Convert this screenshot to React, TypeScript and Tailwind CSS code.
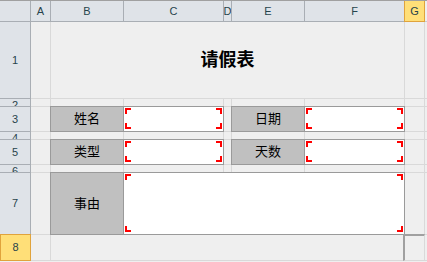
const hdr = "bg-[#dfe3e8] border-r border-b border-[#a9aeb4] flex items-center justify-center overflow-hidden text-[11px] text-[#27434c]";
const cell = "border-r border-b border-[#d9d9d9]";
const rest = "border-b border-[#d9d9d9]";

function Marks() {
  return (
    <>
      <span className="absolute left-px top-px w-[6px] h-[6px] border-l-2 border-t-2 border-[#ff0000]" />
      <span className="absolute right-px top-px w-[6px] h-[6px] border-r-2 border-t-2 border-[#ff0000]" />
      <span className="absolute left-px bottom-[2px] w-[6px] h-[6px] border-l-2 border-b-2 border-[#ff0000]" />
      <span className="absolute right-px bottom-[2px] w-[6px] h-[6px] border-r-2 border-b-2 border-[#ff0000]" />
    </>
  );
}

function Label({ text, span = "" }: { text: string; span?: string }) {
  return (
    <div
      className={`relative -ml-px -mt-px border border-[#9a9a9a] bg-[#c0c0c0] flex items-center justify-center text-[13px] text-black ${span}`}
    >
      {text}
    </div>
  );
}

function Input({ span = "" }: { span?: string }) {
  return <div className={`relative -ml-px -mt-px border border-[#9a9a9a] bg-white ${span}`}><Marks /></div>;
}

function RowHead({ n, small }: { n: string; small?: boolean }) {
  return <div className={`${hdr} ${small ? "items-start leading-[11px] pt-px" : ""}`}>{n}</div>;
}

// row with plain cells only (rows 2, 4, 6)
function Spacer({ n }: { n: string }) {
  return (
    <>
      <RowHead n={n} small />
      <div className={cell} />
      <div className={cell} />
      <div className={cell} />
      <div className={cell} />
      <div className={cell} />
      <div className={cell} />
      <div className={cell} />
      <div className={rest} />
    </>
  );
}

export default function App() {
  return (
    <div
      className="w-[427px] h-[262px] overflow-hidden bg-[#efefef] border-t border-[#a0a0a0]"
      style={{ fontFamily: '"Liberation Sans", "Noto Sans CJK SC", sans-serif' }}
    >
      <div className="grid grid-cols-[31px_20px_73px_100px_8px_73px_100px_20px_1fr] grid-rows-[21px_77px_8px_25px_8px_25px_8px_62px_26px]">
        {/* column headers */}
        <div className={hdr} />
        <div className={hdr}>A</div>
        <div className={hdr}>B</div>
        <div className={hdr}>C</div>
        <div className={hdr}>D</div>
        <div className={hdr}>E</div>
        <div className={hdr}>F</div>
        <div className="relative -ml-px bg-[#ffdf78] border-x border-b border-[#e0a33c] flex items-center justify-center text-[11px] text-[#27434c]">
          G
        </div>
        <div className="border-b border-[#c8ccd0]" />

        {/* row 1 */}
        <RowHead n="1" />
        <div className={cell} />
        <div className={`${cell} col-span-5 flex items-center justify-center text-[18px] font-bold text-black`}>请假表</div>
        <div className={cell} />
        <div className={rest} />

        <Spacer n="2" />

        {/* row 3 */}
        <RowHead n="3" />
        <div className={cell} />
        <Label text="姓名" />
        <Input />
        <div className={cell} />
        <Label text="日期" />
        <Input />
        <div className={cell} />
        <div className={rest} />

        <Spacer n="4" />

        {/* row 5 */}
        <RowHead n="5" />
        <div className={cell} />
        <Label text="类型" />
        <Input />
        <div className={cell} />
        <Label text="天数" />
        <Input />
        <div className={cell} />
        <div className={rest} />

        <Spacer n="6" />

        {/* row 7 */}
        <RowHead n="7" />
        <div className={cell} />
        <Label text="事由" />
        <Input span="col-span-4" />
        <div className={cell} />
        <div className={rest} />

        {/* row 8 */}
        <div className="relative -mt-px bg-[#ffdf78] border border-[#e0a33c] flex items-center justify-center text-[11px] text-[#27434c]">
          8
        </div>
        <div className={cell} />
        <div className={`${cell} col-span-5`} />
        <div className="relative -ml-[2px] -mt-px border-l-2 border-t-2 border-l-[#a0a0a0] border-t-[#a0a0a0] border-r border-b border-r-[#d9d9d9] border-b-[#d9d9d9]" />
        <div className={rest} />
      </div>
    </div>
  );
}
